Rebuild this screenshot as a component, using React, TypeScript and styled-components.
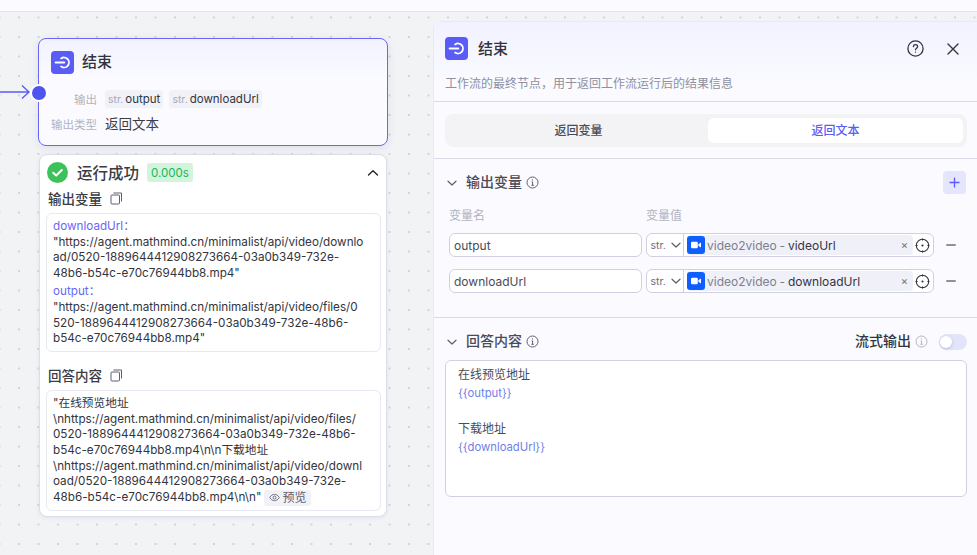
import React, { FC } from 'react';
import styled, { createGlobalStyle } from 'styled-components';

const GlobalStyle = createGlobalStyle`
  html, body {
    margin: 0;
    padding: 0;
    width: 977px;
    height: 555px;
    overflow: hidden;
    font-family: Inter, "Noto Sans CJK SC", sans-serif;
    color: #33343d;
  }
  * { box-sizing: border-box; }
`;

const Page = styled.div`
  width: 977px;
  height: 555px;
  display: flex;
  flex-direction: column;
`;

const TopBar = styled.div`
  height: 12px;
  flex: none;
  background: #fafaff;
  border-bottom: 1px solid #e2e3f0;
`;

const Canvas = styled.div`
  flex: 1;
  min-height: 0;
  display: flex;
  background-color: #f2f3f5;
  background-image: radial-gradient(circle, #d3d4da 0.9px, transparent 1.1px);
  background-size: 19.5px 19.5px;
  background-position: 9.25px -4.25px;
`;

const Flow = styled.div`
  width: 433px;
  flex: none;
  padding: 26px 0 0 38px;
  display: flex;
  flex-direction: column;
  gap: 8px;
`;

const NodeCard = styled.div`
  position: relative;
  width: 350px;
  height: 108px;
  padding: 12px;
  border: 1px solid #6a66f8;
  border-radius: 8px;
  background: linear-gradient(180deg, #f1f2ff 0%, #fbfbff 40%, #fbfbff 100%);
  box-shadow: 0 2px 8px rgba(60, 60, 120, 0.1);
`;

const Edge = styled.svg`
  position: absolute;
  left: -39px;
  top: 44px;
`;

const Handle = styled.span`
  position: absolute;
  left: -9px;
  top: 45px;
  width: 18px;
  height: 18px;
  border-radius: 50%;
  background: #4f54ee;
  border: 2px solid #ffffff;
`;

const TitleRow = styled.div`
  display: flex;
  align-items: center;
  gap: 8px;
`;

const EndBadge = styled.span`
  width: 23px;
  height: 23px;
  flex: none;
  display: flex;
  align-items: center;
  justify-content: center;
  border-radius: 4px;
  background: #5a5cf6;
`;

const NodeTitle = styled.span`
  margin-top: -2px;
  font-size: 15px;
  line-height: 21px;
  font-weight: 500;
  color: #33343d;
`;

const NodeRow = styled.div<{ $top: number }>`
  display: grid;
  grid-template-columns: 46px 1fr;
  column-gap: 8px;
  align-items: center;
  height: 18px;
  margin-top: ${(p) => p.$top}px;
`;

const NodeLabel = styled.span`
  font-size: 11.5px;
  color: #b1b3c0;
  text-align: right;
`;

const Tags = styled.div`
  display: flex;
  gap: 6px;
`;

const Tag = styled.span`
  height: 18px;
  padding: 0 3px 0 3px;
  display: inline-flex;
  align-items: center;
  gap: 2px;
  border-radius: 3px;
  background: #f1f1f8;
  font-size: 11.5px;
  color: #33343d;
`;

const TagType = styled.span`
  font-size: 10.5px;
  color: #a7a9b8;
`;

const NodeValue = styled.span`
  margin-top: -1px;
  font-size: 13.5px;
  color: #3c3d47;
`;

const ResultCard = styled.div`
  width: 348px;
  margin-left: 1px;
  padding: 7px 5px 5px 6px;
  background: #ffffff;
  border: 1px solid #dcdde8;
  border-radius: 8px;
  box-shadow: 0 1px 4px rgba(60, 60, 120, 0.08);
`;

const ResultHead = styled.div`
  height: 21px;
  padding-left: 1px;
  display: flex;
  align-items: center;
`;

const ResultTitle = styled.span`
  margin: -2px 0 0 9px;
  font-size: 15.5px;
  font-weight: 500;
  color: #3a3b45;
`;

const Duration = styled.span`
  margin-left: 8px;
  height: 19px;
  padding: 0 4px;
  display: flex;
  align-items: center;
  border-radius: 3px;
  background: #d3f3dc;
  color: #16b855;
  font-size: 11.5px;
`;

const Caret = styled.svg`
  margin-left: auto;
  margin-right: 2px;
`;

const ResultHeading = styled.div<{ $top: number }>`
  height: 16px;
  margin: ${(p) => p.$top}px 0 7px 2px;
  display: flex;
  align-items: center;
  gap: 8px;
  font-size: 13.5px;
  font-weight: 500;
  color: #3a3b45;
`;

const OutputBox = styled.div`
  padding: 5px 6px 4px;
  border: 1px solid #e8e9f2;
  border-radius: 6px;
  font-size: 11.7px;
  line-height: 15.6px;
  color: #33343d;
  white-space: nowrap;
`;

const OutputItem = styled.div`
  & + & {
    margin-top: 3px;
  }
`;

const OutputKey = styled.div`
  color: #6a66f8;
`;

const PreviewTag = styled.span`
  display: inline-flex;
  align-items: center;
  gap: 2px;
  height: 16px;
  padding: 0 5px;
  margin-left: 3px;
  vertical-align: middle;
  border-radius: 3px;
  background: #f1f1f8;
  font-size: 12px;
  color: #5d5f6e;
`;

const Panel = styled.div`
  flex: 1;
  min-width: 0;
  margin-top: 9px;
  background: #fbfbff;
  border-left: 1px solid #e8e9f2;
  border-top: 1px solid #e8e9f2;
  border-top-left-radius: 8px;
`;

const PanelHeader = styled.div`
  height: 80px;
  padding: 15px 18px 0 11px;
  border-bottom: 1px solid #d9dae8;
  background: linear-gradient(180deg, #f1f2ff 0%, #fbfbff 85%);
`;

const PanelTitleRow = styled.div`
  display: flex;
  align-items: center;
  gap: 10px;
`;

const PanelTitle = styled.span`
  margin-top: -2px;
  font-size: 15px;
  font-weight: 500;
  color: #33343d;
`;

const HeaderActions = styled.div`
  margin-left: auto;
  display: flex;
  align-items: center;
  gap: 23px;
`;

const PanelDesc = styled.div`
  margin-top: 15px;
  font-size: 12px;
  line-height: 18px;
  color: #8e909f;
`;

const TabsSection = styled.div`
  padding: 12px 10px 11px 11px;
  border-bottom: 1px solid #d9dae8;
`;

const Tabs = styled.div`
  height: 33px;
  padding: 4px;
  display: grid;
  grid-template-columns: 1fr 255px;
  border-radius: 8px;
  background: #f3f3f6;
`;

const TabItem = styled.div<{ $active?: boolean }>`
  display: flex;
  align-items: center;
  justify-content: center;
  padding-bottom: 2px;
  border-radius: 6px;
  font-size: 12px;
  font-weight: 500;
  background: ${(p) => (p.$active ? '#ffffff' : 'transparent')};
  color: ${(p) => (p.$active ? '#5a5cf6' : '#4a4b55')};
`;

const VarsSection = styled.div`
  height: 159px;
  padding: 12px 10px 0 11px;
  border-bottom: 1px solid #d9dae8;
`;

const SectionHead = styled.div`
  height: 23px;
  padding-left: 2px;
  display: flex;
  align-items: center;
`;

const SectionTitle = styled.span`
  margin: -3px 0 0 9px;
  font-size: 14px;
  font-weight: 500;
  color: #4a4b58;
`;

const InfoIcon = styled.svg`
  margin-left: 4px;
`;

const AddButton = styled.span`
  margin-left: auto;
  margin-right: 1px;
  width: 23px;
  height: 23px;
  display: flex;
  align-items: center;
  justify-content: center;
  border-radius: 4px;
  background: #e5e6fd;
`;

const VarGrid = styled.div`
  margin-top: 12px;
  padding-left: 4px;
  display: grid;
  grid-template-columns: 193px 288px 1fr;
  column-gap: 4px;
  row-gap: 12px;
  align-items: center;
`;

const ColumnLabel = styled.span`
  height: 15px;
  font-size: 12px;
  line-height: 20px;
  color: #b1b3c0;
`;

const NameInput = styled.div`
  height: 24px;
  padding: 0 4px;
  display: flex;
  align-items: center;
  border: 1px solid #cfd1e2;
  border-radius: 6px;
  background: #ffffff;
  font-size: 12px;
  color: #4a4b55;
`;

const ValueGroup = styled.div`
  height: 24px;
  display: flex;
  align-items: center;
  border: 1px solid #cfd1e2;
  border-radius: 6px;
  background: #ffffff;
`;

const TypeSelect = styled.div`
  width: 37px;
  height: 100%;
  flex: none;
  padding-left: 3.5px;
  display: flex;
  align-items: center;
  gap: 5px;
  border-right: 1px solid #cfd1e2;
  font-size: 10.5px;
  color: #6d6f7d;
`;

const ValueChip = styled.div`
  width: 226px;
  height: 20px;
  flex: none;
  margin-left: 3px;
  display: flex;
  align-items: center;
  border-radius: 4px;
  background: #f0f0f9;
  font-size: 12px;
  white-space: pre;
`;

const VideoBadge = styled.span`
  width: 18px;
  height: 18px;
  flex: none;
  margin-right: 2px;
  display: flex;
  align-items: center;
  justify-content: center;
  border-radius: 3px;
  background: #0f5fff;
`;

const ChipSource = styled.span`
  word-spacing: -0.5px;
  color: #7d7f8d;
`;

const ChipName = styled.span`
  color: #33343d;
`;

const ChipClose = styled.span`
  margin-left: auto;
  margin-right: 5px;
  font-size: 11px;
  line-height: 1;
  color: #6d6f7d;
`;

const TargetIcon = styled.svg`
  margin-left: 2px;
  flex: none;
`;

const MinusMark = styled.span`
  width: 10px;
  height: 2px;
  margin-left: 8px;
  border-radius: 1px;
  background: #8e909f;
`;

const AnswerSection = styled.div`
  padding: 12px 10px 0 11px;
`;

const StreamLabel = styled.span`
  margin: -3px 0 0 auto;
  font-size: 14px;
  font-weight: 500;
  color: #33343d;
`;

const StreamToggle = styled.span`
  position: relative;
  width: 28px;
  height: 16px;
  margin-left: 11px;
  border-radius: 8px;
  background: #e2e4fa;
`;

const ToggleKnob = styled.span`
  position: absolute;
  left: 1px;
  top: 2px;
  width: 12px;
  height: 12px;
  border-radius: 50%;
  background: #ffffff;
  box-shadow: 0 1px 3px rgba(60, 60, 120, 0.25);
`;

const AnswerBox = styled.div`
  height: 137px;
  margin-top: 7px;
  padding: 5px 12px;
  border: 1px solid #cfd1e2;
  border-radius: 6px;
  background: #ffffff;
  font-size: 12px;
  line-height: 18px;
  color: #4a4b55;
`;

const AnswerLine = styled.div<{ $variable?: boolean }>`
  min-height: 18px;
  font-size: ${(p) => (p.$variable ? '11.3px' : '12px')};
  color: ${(p) => (p.$variable ? '#6f80e8' : '#4a4b55')};
`;

const EndIcon: FC = () => (
  <svg width="17" height="17" viewBox="0 0 17 17" fill="none" stroke="#fff" strokeLinecap="round">
    <path d="M1.6 8.5H10.2" strokeWidth="2" />
    <path d="M7.1 4.4A5 5 0 1 1 7.1 12.6" strokeWidth="1.8" />
  </svg>
);

const InfoGlyph: FC<{ color?: string }> = ({ color = '#5d5f6e' }) => (
  <InfoIcon width="13" height="13" viewBox="0 0 13 13" fill="none" stroke={color} strokeWidth="1">
    <circle cx="6.5" cy="6.5" r="5.5" />
    <path d="M5.6 5.9H6.6V9.3M5.4 9.3H7.8" />
    <circle cx="6.4" cy="3.9" r="0.6" fill={color} stroke="none" />
  </InfoIcon>
);

const Chevron: FC<{ size?: number; color?: string }> = ({ size = 10, color = '#5d5f6e' }) => (
  <svg width={size} height={size} viewBox="0 0 10 10" fill="none" stroke={color} strokeWidth="1.2" strokeLinecap="round" strokeLinejoin="round">
    <path d="M1 3.2L5 7L9 3.2" />
  </svg>
);

const CopyIcon: FC = () => (
  <svg width="13" height="13" viewBox="0 0 13 13" fill="none" stroke="#5d5f6e" strokeWidth="1">
    <rect x="1" y="3" width="8.5" height="9" rx="1" />
    <path d="M3.5 1H11.5V9.5" />
  </svg>
);

const VideoIcon: FC = () => (
  <svg width="12" height="12" viewBox="0 0 12 12" fill="#fff">
    <rect x="1" y="2.8" width="6.8" height="6.4" rx="1.2" />
    <path d="M8.4 5.2L11 3.6V8.4L8.4 6.8Z" />
  </svg>
);

const VarRow: FC<{ name: string; field: string }> = ({ name, field }) => (
  <>
    <NameInput>{name}</NameInput>
    <ValueGroup>
      <TypeSelect>
        str.
        <Chevron />
      </TypeSelect>
      <ValueChip>
        <VideoBadge>
          <VideoIcon />
        </VideoBadge>
        <ChipSource>video2video - </ChipSource>
        <ChipName>{field}</ChipName>
        <ChipClose>×</ChipClose>
      </ValueChip>
      <TargetIcon width="15" height="15" viewBox="0 0 15 15" fill="none" stroke="#33343d" strokeWidth="1.1">
        <circle cx="7.5" cy="7.5" r="6.2" />
        <path d="M7.5 0.6V2.6M7.5 12.4V14.4M0.6 7.5H2.6M12.4 7.5H14.4" />
        <circle cx="7.5" cy="7.5" r="1.1" fill="#33343d" stroke="none" />
      </TargetIcon>
    </ValueGroup>
    <MinusMark />
  </>
);

const App: FC = () => (
  <Page>
    <GlobalStyle />
    <TopBar />
    <Canvas>
      <Flow>
        <NodeCard>
          <Edge width="30" height="18" viewBox="0 0 30 18" fill="none" stroke="#5a5cf6" strokeWidth="1.4">
            <path d="M0 9H29M22 2.5L29 9L22 15.5" />
          </Edge>
          <Handle />
          <TitleRow>
            <EndBadge>
              <EndIcon />
            </EndBadge>
            <NodeTitle>结束</NodeTitle>
          </TitleRow>
          <NodeRow $top={16}>
            <NodeLabel>输出</NodeLabel>
            <Tags>
              <Tag>
                <TagType>str.</TagType>output
              </Tag>
              <Tag>
                <TagType>str.</TagType>downloadUrl
              </Tag>
            </Tags>
          </NodeRow>
          <NodeRow $top={6}>
            <NodeLabel>输出类型</NodeLabel>
            <NodeValue>返回文本</NodeValue>
          </NodeRow>
        </NodeCard>
        <ResultCard>
          <ResultHead>
            <svg width="21" height="21" viewBox="0 0 21 21">
              <circle cx="10.5" cy="10.5" r="10.5" fill="#3cc25a" />
              <path d="M6.2 10.8L9.2 13.6L14.8 8" fill="none" stroke="#fff" strokeWidth="2" strokeLinecap="round" strokeLinejoin="round" />
            </svg>
            <ResultTitle>运行成功</ResultTitle>
            <Duration>0.000s</Duration>
            <Caret width="12" height="12" viewBox="0 0 12 12" fill="none" stroke="#1f2028" strokeWidth="1.3" strokeLinecap="round" strokeLinejoin="round">
              <path d="M1.5 8L6 3.8L10.5 8" />
            </Caret>
          </ResultHead>
          <ResultHeading $top={7}>
            输出变量
            <CopyIcon />
          </ResultHeading>
          <OutputBox>
            <OutputItem>
              <OutputKey>downloadUrl：</OutputKey>
              "https://agent.mathmind.cn/minimalist/api/video/downlo
              <br />
              ad/0520-1889644412908273664-03a0b349-732e-
              <br />
              48b6-b54c-e70c76944bb8.mp4"
            </OutputItem>
            <OutputItem>
              <OutputKey>output：</OutputKey>
              "https://agent.mathmind.cn/minimalist/api/video/files/0
              <br />
              520-1889644412908273664-03a0b349-732e-48b6-
              <br />
              b54c-e70c76944bb8.mp4"
            </OutputItem>
          </OutputBox>
          <ResultHeading $top={15.5}>
            回答内容
            <CopyIcon />
          </ResultHeading>
          <OutputBox>
            "在线预览地址
            <br />
            \nhttps://agent.mathmind.cn/minimalist/api/video/files/
            <br />
            0520-1889644412908273664-03a0b349-732e-48b6-
            <br />
            b54c-e70c76944bb8.mp4\n\n下载地址
            <br />
            \nhttps://agent.mathmind.cn/minimalist/api/video/downl
            <br />
            oad/0520-1889644412908273664-03a0b349-732e-
            <br />
            48b6-b54c-e70c76944bb8.mp4\n\n"
            <PreviewTag>
              <svg width="11" height="11" viewBox="0 0 12 12" fill="none" stroke="#5d5f6e" strokeWidth="0.9">
                <path d="M0.8 6C2.2 3.6 4 2.6 6 2.6S9.8 3.6 11.2 6C9.8 8.4 8 9.4 6 9.4S2.2 8.4 0.8 6Z" />
                <circle cx="6" cy="6" r="1.6" />
              </svg>
              预览
            </PreviewTag>
          </OutputBox>
        </ResultCard>
      </Flow>
      <Panel>
        <PanelHeader>
          <PanelTitleRow>
            <EndBadge>
              <EndIcon />
            </EndBadge>
            <PanelTitle>结束</PanelTitle>
            <HeaderActions>
              <svg width="17" height="17" viewBox="0 0 17 17" fill="none" stroke="#33343d" strokeWidth="1.3" strokeLinecap="round">
                <circle cx="8.5" cy="8.5" r="7.6" />
                <path d="M6.4 6.6C6.5 5.4 7.4 4.7 8.5 4.7C9.7 4.7 10.6 5.5 10.6 6.6C10.6 8.1 8.5 8.2 8.5 9.8" />
                <circle cx="8.5" cy="12.1" r="0.7" fill="#33343d" stroke="none" />
              </svg>
              <svg width="12" height="12" viewBox="0 0 12 12" fill="none" stroke="#33343d" strokeWidth="1.4" strokeLinecap="round">
                <path d="M1 1L11 11M11 1L1 11" />
              </svg>
            </HeaderActions>
          </PanelTitleRow>
          <PanelDesc>工作流的最终节点，用于返回工作流运行后的结果信息</PanelDesc>
        </PanelHeader>
        <TabsSection>
          <Tabs>
            <TabItem>返回变量</TabItem>
            <TabItem $active>返回文本</TabItem>
          </Tabs>
        </TabsSection>
        <VarsSection>
          <SectionHead>
            <Chevron />
            <SectionTitle>输出变量</SectionTitle>
            <InfoGlyph />
            <AddButton>
              <svg width="11" height="11" viewBox="0 0 11 11" fill="none" stroke="#5a5cf6" strokeWidth="1.3">
                <path d="M5.5 0.5V10.5M0.5 5.5H10.5" />
              </svg>
            </AddButton>
          </SectionHead>
          <VarGrid>
            <ColumnLabel>变量名</ColumnLabel>
            <ColumnLabel>变量值</ColumnLabel>
            <span />
            <VarRow name="output" field="videoUrl" />
            <VarRow name="downloadUrl" field="downloadUrl" />
          </VarGrid>
        </VarsSection>
        <AnswerSection>
          <SectionHead>
            <Chevron />
            <SectionTitle>回答内容</SectionTitle>
            <InfoGlyph />
            <StreamLabel>流式输出</StreamLabel>
            <InfoGlyph color="#b1b3c0" />
            <StreamToggle>
              <ToggleKnob />
            </StreamToggle>
          </SectionHead>
          <AnswerBox>
            <AnswerLine>在线预览地址</AnswerLine>
            <AnswerLine $variable>{'{{output}}'}</AnswerLine>
            <AnswerLine />
            <AnswerLine>下载地址</AnswerLine>
            <AnswerLine $variable>{'{{downloadUrl}}'}</AnswerLine>
          </AnswerBox>
        </AnswerSection>
      </Panel>
    </Canvas>
  </Page>
);

export default App;
